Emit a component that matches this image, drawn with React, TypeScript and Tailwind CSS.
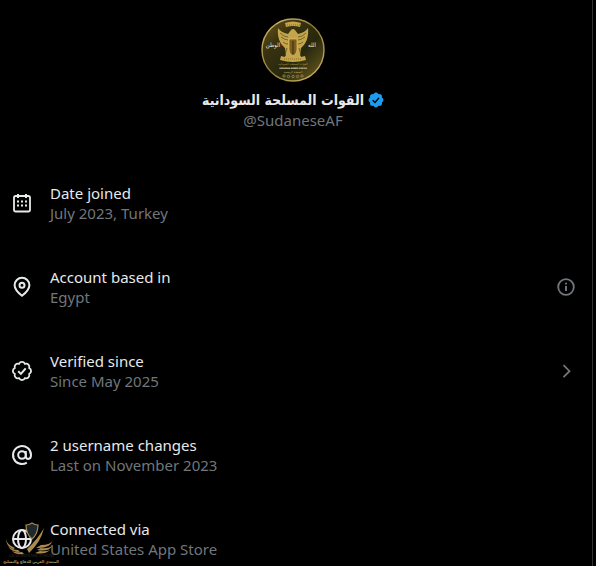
import type { ReactNode } from "react";

const BADGE =
  "M22.25 12c0-1.43-.88-2.67-2.19-3.34.46-1.39.2-2.9-.81-3.91s-2.52-1.27-3.91-.81c-.66-1.31-1.91-2.19-3.34-2.19s-2.67.88-3.33 2.19c-1.4-.46-2.91-.2-3.92.81s-1.26 2.52-.8 3.91c-1.31.67-2.2 1.91-2.2 3.34s.89 2.67 2.2 3.34c-.46 1.39-.21 2.9.8 3.91s2.52 1.26 3.91.81c.67 1.31 1.91 2.19 3.34 2.19s2.68-.88 3.34-2.19c1.39.45 2.9.2 3.91-.81s1.27-2.52.81-3.91c1.31-.67 2.19-1.91 2.19-3.34z";

function LineIcon({ children }: { children: ReactNode }) {
  return (
    <svg
      viewBox="0 0 24 24"
      className="size-6 shrink-0 fill-none stroke-[#e7e9ea] stroke-2"
      aria-hidden="true"
    >
      {children}
    </svg>
  );
}

function CalendarIcon() {
  return (
    <LineIcon>
      <rect x="4" y="5" width="16" height="15.5" rx="1.8" strokeWidth="1.8" />
      <path d="M8 3v4M16 3v4" />
      <path
        d="M11 9.5h2v2h-2zM15 9.5h2v2h-2zM7 13.5h2v2H7zM11 13.5h2v2h-2zM7 9.5h2v2H7zM15 13.5h2v2h-2z"
        className="fill-[#e7e9ea] stroke-none"
      />
    </LineIcon>
  );
}

function PinIcon() {
  return (
    <LineIcon>
      <path d="M12 20.8C8 17.6 4.6 14 4.6 10.2a7.4 7.4 0 0 1 14.8 0c0 3.8-3.4 7.4-7.4 10.6z" />
      <circle cx="12" cy="10.3" r="2.5" />
    </LineIcon>
  );
}

function VerifiedOutlineIcon() {
  return (
    <LineIcon>
      <path d={BADGE} transform="translate(1.3 1.3) scale(.89)" />
      <path d="M8.2 12.3l2.7 2.6 4.8-5.6" />
    </LineIcon>
  );
}

function AtIcon() {
  return (
    <LineIcon>
      <circle cx="12" cy="12" r="3.8" />
      <path d="M15.8 8v5.2c0 1.6 1 2.7 2.5 2.7 1.7 0 2.7-1.5 2.7-3.9a9 9 0 1 0-4.2 7.6" />
    </LineIcon>
  );
}

function GlobeIcon() {
  return (
    <LineIcon>
      <circle cx="12" cy="12" r="9" />
      <ellipse cx="12" cy="12" rx="4" ry="9" />
      <path d="M3 12h18" />
    </LineIcon>
  );
}

function InfoIcon() {
  return (
    <svg viewBox="0 0 20 20" className="size-5 fill-none stroke-[#71767b]" aria-hidden="true">
      <circle cx="10" cy="10" r="7.8" strokeWidth="1.8" />
      <path d="M10 9v5M10 5.8v1.8" strokeWidth="2" />
    </svg>
  );
}

function ChevronIcon() {
  return (
    <svg viewBox="0 0 20 20" className="size-5 fill-none stroke-[#71767b]" aria-hidden="true">
      <path d="M7.5 4.2l6 6-6 6" strokeWidth="1.8" />
    </svg>
  );
}

function Avatar() {
  return (
    <svg viewBox="0 0 64 64" className="size-16" role="img" aria-label="Profile emblem">
      <defs>
        <linearGradient id="field" x1="0" y1="0" x2="1" y2="1">
          <stop offset="0" stopColor="#6f5c1b" />
          <stop offset=".3" stopColor="#3a3211" />
          <stop offset=".6" stopColor="#26280e" />
          <stop offset="1" stopColor="#75611f" />
        </linearGradient>
        <linearGradient id="rim" x1="0" y1="0" x2="1" y2="1">
          <stop offset="0" stopColor="#dcc476" />
          <stop offset=".5" stopColor="#8f7a36" />
          <stop offset="1" stopColor="#d4bd72" />
        </linearGradient>
      </defs>
      <circle cx="32" cy="32" r="31" fill="url(#field)" stroke="url(#rim)" strokeWidth="1.4" />
      <g fill="#c4a54b">
        <path d="M24 5q8-3 16 0l-1 4q-7-2-14 0z" />
        <path d="M17 10c2 3 5 5 10 6l3-4q2-2 4 0l3 4c5-1 8-3 10-6 1 9-2 16-7 20l-1 7 2 3H23l2-3-1-7c-5-4-8-11-7-20z" />
        <path d="M20 38q12 4 24 0l1 4q-13 4-26 0z" />
      </g>
      <path
        d="M19 15q4 4 8 4M20 19q4 3 7 3M22 24q2 2 5 2M45 15q-4 4-8 4M44 19q-4 3-7 3M42 24q-2 2-5 2M26 30l-2 7M38 30l2 7"
        fill="none"
        stroke="#65511c"
        strokeWidth=".8"
      />
      <path d="M28 21h8v11q0 4-4 6-4-2-4-6z" fill="#7d5d1d" stroke="#dcc476" strokeWidth=".7" />
      <path d="M32 23v13" stroke="#3a2d0d" strokeWidth="1" />
      <path d="M24 7h16M23 41h18" stroke="#75601f" strokeWidth=".8" strokeDasharray="1 1" />
      <g className="font-['DejaVu_Sans_Condensed','DejaVu_Sans',sans-serif]" textAnchor="middle">
        <text x="12" y="29" fontSize="6" fill="#e8e4d0">الوطن</text>
        <text x="51" y="29" fontSize="6" fill="#e8e4d0">الله</text>
        <text x="32" y="47" fontSize="3" fill="#b79a43">القوات المسلحة السودانية</text>
        <text x="32" y="51" fontSize="2" fill="#f0e7c7" className="font-bold">
          SUDANESE ARMED FORCES
        </text>
        <text x="32" y="55" fontSize="3" fill="#c5aa5c">الصفحة الرسمية</text>
      </g>
      <g fill="none" stroke="#a8935a" strokeWidth=".7">
        <circle cx="23" cy="58" r="1.2" />
        <circle cx="27.5" cy="58.5" r="1.2" />
        <circle cx="32" cy="58.5" r="1.2" />
        <circle cx="36.5" cy="58.5" r="1.2" />
        <circle cx="41" cy="58" r="1.2" />
      </g>
    </svg>
  );
}

function ForumWatermark() {
  return (
    <svg
      viewBox="0 0 60 46"
      className="absolute bottom-0 left-0 h-[46px] w-[60px]"
      role="img"
      aria-label="Arab defense forum"
    >
      <g fill="#ab8a4f">
        <path d="M6 19q1 6 9 9-1 1-2 1Q6 26 6 19zM8 26q4 4 10 4l2 2q-9 0-12-6zM12 31q4 2 10 1l2 2q-8 1-12-3z" />
        <path d="M53 20q-2 5-12 5l-5 3q14 1 17-8zM52 26q-4 3-11 2l-4 2q12 2 15-4zM50 30q-4 2-10 1l-5 2q10 2 15-3z" />
        <path d="M44 8q-3 14-15 25l-2-4Q37 20 44 8z" />
      </g>
      <path d="M26 5q3 0 6-2 3 2 6 2 0 9-6 14-6-5-6-14z" fill="#1c2930" stroke="#ab8a4f" strokeWidth="1.2" />
      <text
        x="31"
        y="37"
        fontSize="4"
        textAnchor="middle"
        fill="#34332c"
        className="font-['Liberation_Serif',serif]"
      >
        ARAB DEFENSE FORUM
      </text>
      <text
        x="31"
        y="43"
        fontSize="4"
        textAnchor="middle"
        fill="#b39a65"
        className="font-['DejaVu_Sans_Condensed','DejaVu_Sans',sans-serif] font-bold"
      >
        المنتدى العربي للدفاع والتسليح
      </text>
    </svg>
  );
}

type Detail = {
  icon: ReactNode;
  title: string;
  value: string;
  action?: { label: string; icon: ReactNode };
};

const details: Detail[] = [
  { icon: <CalendarIcon />, title: "Date joined", value: "July 2023, Turkey" },
  {
    icon: <PinIcon />,
    title: "Account based in",
    value: "Egypt",
    action: { label: "About account location", icon: <InfoIcon /> },
  },
  {
    icon: <VerifiedOutlineIcon />,
    title: "Verified since",
    value: "Since May 2025",
    action: { label: "Verification details", icon: <ChevronIcon /> },
  },
  { icon: <AtIcon />, title: "2 username changes", value: "Last on November 2023" },
  { icon: <GlobeIcon />, title: "Connected via", value: "United States App Store" },
];

export default function App() {
  return (
    <div className="min-h-screen bg-black pr-[3px] font-['Noto_Sans',sans-serif] text-[15px] leading-5">
      <main className="relative min-h-screen border-r border-[#2f3336] pt-[18px] pr-4 pb-[7px] pl-2.5">
        <header className="flex flex-col items-center">
          <Avatar />
          <div className="mt-2 flex items-center gap-1">
            <h1
              dir="rtl"
              className="font-['DejaVu_Sans_Condensed','DejaVu_Sans',sans-serif] text-sm leading-5 font-bold text-[#e7e9ea]"
            >
              القوات المسلحة السودانية
            </h1>
            <svg viewBox="1 1 22 22" className="size-4" role="img" aria-label="Verified account">
              <path d={BADGE} fill="#1d9bf0" />
              <path d="M7.5 12.2l3.1 3.1 5.5-6.2" fill="none" stroke="#000" strokeWidth="2" />
            </svg>
          </div>
          <p className="text-[#71767b]">@SudaneseAF</p>
        </header>
        <ul className="mt-[53px] flex flex-col gap-11">
          {details.map((d) => (
            <li key={d.title} className="flex items-center gap-4">
              {d.icon}
              <div className="flex-1">
                <p className="text-[#e7e9ea]">{d.title}</p>
                <p className="text-[#71767b]">{d.value}</p>
              </div>
              {d.action && (
                <button type="button" aria-label={d.action.label}>
                  {d.action.icon}
                </button>
              )}
            </li>
          ))}
        </ul>
        <ForumWatermark />
      </main>
    </div>
  );
}
